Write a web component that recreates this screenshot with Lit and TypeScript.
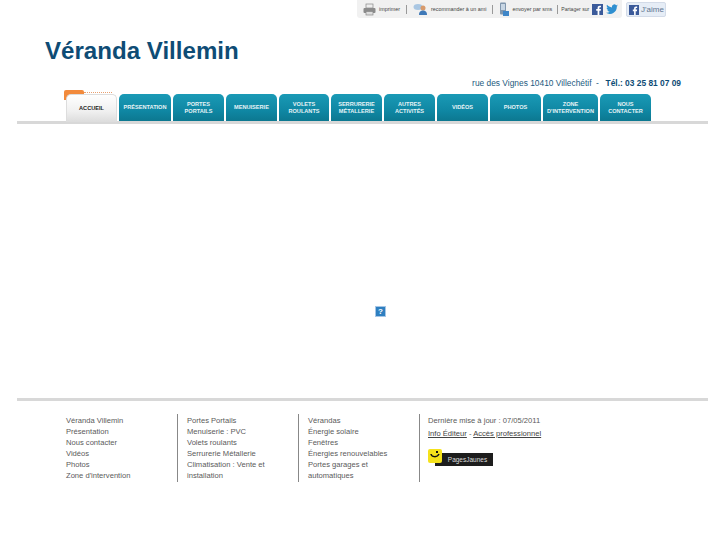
import { LitElement, html, css } from "lit";
import { customElement } from "lit/decorators.js";

const tabs: [string, number][] = [
  ["PRÉSENTATION", 52], ["PORTES<br>PORTAILS", 51], ["MENUISERIE", 51], ["VOLETS<br>ROULANTS", 50],
  ["SERRURERIE<br>MÉTALLERIE", 51], ["AUTRES<br>ACTIVITÉS", 51], ["VIDÉOS", 51], ["PHOTOS", 51],
  ["ZONE<br>D'INTERVENTION", 55], ["NOUS<br>CONTACTER", 51],
];
const fb = (s: number) => html`<svg width=${s} height=${s} viewBox="0 0 12 12"><rect width="12" height="12" fill="#3b5a9a"/><path d="M8 12V7.4h1.5l.3-1.9H8V4.4c0-.6.2-.9.9-.9h.9V1.8H8.500C6.900 1.800 6.100 2.700 6.100 4.200v1.300H4.600v1.900h1.500V12z" fill="#fff"/></svg>`;

@customElement("app-root")
export class AppRoot extends LitElement {
  static styles = css`
    :host { display: block; width: 727px; height: 545px; background: #fff; overflow: hidden; font-family: "Liberation Sans", Arial, sans-serif; color: #555; }
    .top { display: flex; justify-content: flex-end; align-items: flex-start; gap: 4px; padding-right: 61px; height: 18px; }
    .tools { display: flex; align-items: center; height: 18px; width: 265px; box-sizing: border-box; padding-left: 6px; background: #f1f1f1; border-radius: 0 0 3px 3px; font-size: 5.4px; color: #444; white-space: nowrap; }
    .tool { display: flex; align-items: center; gap: 3px; }
    .sep { width: 1px; height: 9px; background: #999; margin: 0 6px; }
    .sep.last { margin: 0 3px 0 5px; }
    .share { display: flex; align-items: center; gap: 3px; font-size: 5.100px; }
    .like { display: flex; align-items: center; gap: 2px; width: 40px; height: 15px; margin-top: 2px; box-sizing: border-box; padding-left: 2px; background: #e6edf6; border: 1px solid #d3dbe8; border-radius: 2px; font-size: 8px; color: #5f7690; }
    h1 { margin: 0; padding: 19px 0 0 45px; font-size: 24.100px; line-height: 27px; font-weight: bold; color: #0e4c75; }
    .addr { margin-top: 14px; height: 10px; padding-right: 46px; text-align: right; font-size: 8.400px; line-height: 10px; color: #1d5a80; white-space: nowrap; }
    .addr b { margin-left: 2px; color: #0e4c75; }
    .nav { position: relative; display: flex; align-items: flex-start; gap: 2px; height: 27px; margin: 6px 0 0 66px; }
    .deco { position: absolute; left: -2px; top: -4px; width: 20px; height: 10px; background: #f28a3c; border-radius: 2px 2px 0 0; }
    .deco2 { position: absolute; left: 18px; top: -2px; width: 28px; height: 6px; border-top: 1px dotted #e8a070; }
    .tab { position: relative; display: flex; align-items: center; justify-content: center; box-sizing: border-box; height: 27px; border-radius: 5px 5px 0 0; background: linear-gradient(#1a9ab6, #0f86a2 65%, #0c7890); color: #e6f3f6; font-size: 5.6px; line-height: 6.400px; font-weight: bold; text-align: center; white-space: nowrap; }
    .tab.on { width: 51px; height: 28px; background: linear-gradient(#fff, #f0f0f0 60%, #dcdcdc); border: 1px solid #ddd; border-bottom: 0; color: #222; z-index: 1; }
    .rule { height: 3px; margin: 0 19px 0 17px; background: #d8d8d8; }
    .main { box-sizing: border-box; height: 274px; padding: 182px 0 0 375px; }
    .broken { width: 11px; height: 11px; box-sizing: border-box; border: 1px solid #a6c6e6; background: #2e7fc0; color: #fff; font-size: 8px; line-height: 9px; font-weight: bold; text-align: center; }
    .foot { display: flex; margin: 13px 0 0 66px; font-size: 7.600px; line-height: 11.150px; color: #5a5a5a; }
    .col { box-sizing: border-box; height: 68px; padding-top: 0.5px; }
    .c1 { width: 111px; }
    .c2, .c3 { width: 121px; border-left: 1px solid #888; padding-left: 9px; padding-right: 28px; }
    .c3 { padding-right: 20px; }
    .c4 { width: 150px; border-left: 1px solid #888; padding-left: 8px; }
    .c4 a { color: #444; text-decoration: underline; }
    .links { margin-top: 2px; }
    .pj { display: flex; align-items: flex-start; margin: 10px 0 0 0; }
    .smile { position: relative; display: flex; align-items: center; justify-content: center; width: 14px; height: 14px; background: #f5e21b; border-radius: 2px; }
    .pjt { box-sizing: border-box; width: 58px; height: 13px; margin: 4px 0 0 -7px; padding-left: 7px; background: #1d1d1d; color: #ddd; font-size: 6.500px; line-height: 13px; text-align: center; }
  `;

  render() {
    return html`
      <div class="top">
        <div class="tools">
          <span class="tool">
            <svg width="13" height="13" viewBox="0 0 13 13"><rect x="3" y="1" width="7" height="4" fill="#eee" stroke="#888" stroke-width=".7"/><rect x=".5" y="5" width="12" height="5" rx="1" fill="#8b8b8b"/><rect x="3" y="8.500" width="7" height="3.500" fill="#ddd" stroke="#888" stroke-width=".7"/></svg>
            imprimer</span><span class="sep"></span>
          <span class="tool">
            <svg width="15" height="12" viewBox="0 0 15 12"><ellipse cx="5" cy="4" rx="4.500" ry="3" fill="#a9c6e2"/><circle cx="10" cy="5" r="2.500" fill="#d79a6c"/><path d="M6 12c0-3.500 2-4.500 4-4.500s4 1 4 4.500z" fill="#3f79b8"/></svg>
            recommander à un ami</span><span class="sep"></span>
          <span class="tool">
            <svg width="10" height="14" viewBox="0 0 10 14"><rect x="1" y="0.500" width="6" height="12" rx="1" fill="#8096ad"/><rect x="2" y="2" width="4" height="6" fill="#c8d6e4"/><rect x="4" y="9" width="6" height="5" fill="#3f86c8"/></svg>
            envoyer par sms</span><span class="sep last"></span>
          <span class="share">Partager sur ${fb(11)}
            <svg width="12" height="10" viewBox="0 0 12 10"><path d="M12 1.500c-.4.200-.9.300-1.400.400.500-.3.900-.8 1-1.300-.5.300-1 .5-1.500.6a2.400 2.400 0 0 0-4.100 2.200C4 3.300 2.200 2.300 1 .8c-.6 1.100-.3 2.500.7 3.200-.4 0-.8-.1-1.100-.3 0 1.200.8 2.200 1.900 2.400-.3.100-.7.100-1.100 0 .3 1 1.200 1.700 2.300 1.700A5 5 0 0 1 0 8.800 7 7 0 0 0 10.800 2.600c.5-.3.900-.7 1.200-1.100z" fill="#2f8fd0"/></svg>
          </span>
        </div>
        <div class="like">${fb(10)}J'aime</div>
      </div>
      <h1>Véranda Villemin</h1>
      <div class="addr">rue des Vignes 10410 Villechétif &nbsp;- &nbsp;<b>Tél.: 03 25 81 07 09</b></div>
      <div class="nav">
        <span class="deco"></span><span class="deco2"></span>
        <div class="tab on">ACCUEIL</div>
        ${tabs.map(([t, w]) => html`<div class="tab" style="width:${w}px" .innerHTML=${t}></div>`)}
      </div>
      <div class="rule"></div>
      <div class="main"><div class="broken">?</div></div>
      <div class="rule"></div>
      <div class="foot">
        <div class="col c1">Véranda Villemin<br>Présentation<br>Nous contacter<br>Vidéos<br>Photos<br>Zone d'intervention</div>
        <div class="col c2">Portes Portails<br>Menuiserie : PVC<br>Volets roulants<br>Serrurerie Métallerie<br>Climatisation : Vente et installation</div>
        <div class="col c3">Vérandas<br>Énergie solaire<br>Fenêtres<br>Énergies renouvelables<br>Portes garages et automatiques</div>
        <div class="col c4">Dernière mise à jour : 07/05/2011
          <div class="links"><a>Info Éditeur</a> - <a>Accès professionnel</a></div>
          <div class="pj"><span class="smile"><svg width="10" height="9" viewBox="0 0 10 9"><path d="M1 3c.5 3 6 4 8 0" fill="none" stroke="#111" stroke-width="1.500"/><rect x="6" y="0" width="2" height="2" fill="#111"/></svg></span><span class="pjt">PagesJaunes</span></div>
        </div>
      </div>
    `;
  }
}
